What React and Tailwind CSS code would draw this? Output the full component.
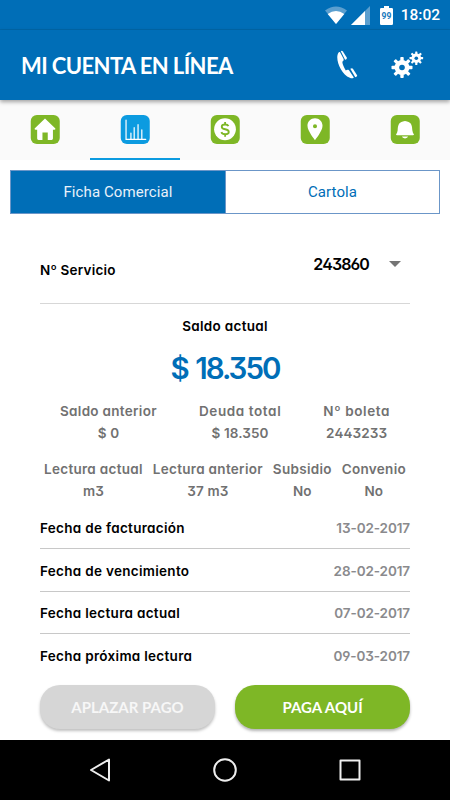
const brand = 'font-[Lato,sans-serif] font-bold';
const body = "font-[Inter,sans-serif] [font-feature-settings:'cv11','ss01']";

function StatusBar() {
  return (
    <div className="relative flex h-[30px] items-center justify-end bg-[#006eb7] pr-[10px] font-[Roboto,sans-serif] text-white shadow-[inset_0_-1px_0_#0066a8]">
      <svg width="22" height="18" viewBox="0 0 22 18" className="mr-[4px]">
        <path d="M0 4.5Q11-3.6 22 4.5L11 18Z" fill="#5b9fcf" />
        <path d="M2.7 8Q11 1.8 19.3 8L11 18Z" fill="#fff" />
      </svg>
      <svg width="19" height="19" viewBox="0 0 19 19" className="mr-[10px]">
        <path d="M0 19L19 0V19Z" fill="#5b9fcf" />
        <path d="M0 19L14 5V19Z" fill="#fff" />
      </svg>
      <svg width="13" height="19" viewBox="0 0 13 19" className="mr-[8px]">
        <path d="M4 0h5v2h2.7Q13 2 13 3.3V17.7Q13 19 11.7 19H1.3Q0 19 0 17.7V3.3Q0 2 1.3 2H4Z" fill="#fff" />
        <text x="6.5" y="12.5" textAnchor="middle" fontSize="8.5" fontWeight="700" fill="#1678bc">99</text>
      </svg>
      <span className="text-[15.5px] leading-[18px] font-medium">18:02</span>
    </div>
  );
}

// toothed wheel drawn around the origin of its group
function Gear({ x, y, scale }) {
  return (
    <g transform={`translate(${x} ${y}) scale(${scale})`}>
      {[0, 45, 90, 135].map((angle) => (
        <rect key={angle} x="-1.7" y="-10.5" width="3.4" height="21" rx="0.8" transform={`rotate(${angle})`} fill="#fff" />
      ))}
      <circle r="7.4" fill="#fff" />
      <circle r="2.8" fill="#006eb7" />
    </g>
  );
}

function Header() {
  return (
    <header className="relative z-10 flex h-[70px] items-center bg-[#006eb7] pl-[21px] shadow-[0_2px_4px_rgba(0,0,0,0.35)]">
      <h1 className={`${brand} w-[315px] pt-px text-[22px] leading-[30px] tracking-[-0.6px] whitespace-nowrap text-white`}>MI CUENTA EN LÍNEA</h1>
      <svg width="22" height="30" viewBox="0 0 22 30" fill="#fff">
        <path d="M2.6 2.6C-1.6 8.2 4.8 23.9 13.8 27.8C15.8 28.7 17.5 28.2 17.8 27.6L13 20.3C11.8 19.5 10.7 20 9.8 20.4C8 17.5 6.6 14.5 6.3 11.7C7.6 11 7.9 10.2 7.5 8.8L4.2 2.5C3.7 1.9 3.1 1.9 2.6 2.6Z" />
        <path d="M4.8 1.2Q5.9 0.4 6.9 1.4L10.9 7.7C11 9 9.9 9.8 9.1 9.7Z" />
        <path d="M14.3 18.8Q16 17.6 16.9 18.7L21.2 25.5Q21.3 26.8 19.3 27.2Z" />
      </svg>
      <svg width="34" height="30" viewBox="0 0 34 30" className="ml-[33px]">
        <Gear x={11} y={17.5} scale={1} />
        <Gear x={25.3} y={8.2} scale={0.65} />
      </svg>
    </header>
  );
}

const tabs = [
  {
    id: 'inicio',
    color: '#7eb726',
    icon: <path d="M14 3.5L24.2 13.2Q24.5 14.5 23 14.5H21.8V23.2Q21.8 24.5 20.5 24.5H16.7V17.3H11.5V24.5H7.6Q6.3 24.5 6.3 23.2V14.5H5Q3.5 14.5 3.8 13.2Z" fill="#fff" />,
  },
  {
    id: 'cuenta',
    color: '#0c9be0',
    icon: (
      <g fill="none" stroke="#fff" strokeWidth="1.2" strokeLinecap="round">
        <path d="M5.2 5V24H24.5" />
        <path d="M10 23.5V17.7M13.2 23.5V12.5M17 23.5V9.5M20.7 23.5V14.5" />
      </g>
    ),
  },
  {
    id: 'pagos',
    color: '#7eb726',
    icon: (
      <>
        <circle cx="14" cy="14" r="10.7" fill="#fff" />
        <path d="M17.4 11Q16.7 9.3 14.1 9.3Q10.8 9.3 10.8 11.5Q10.8 13.4 14.1 14Q17.7 14.6 17.7 16.7Q17.7 18.9 14.3 18.9Q11.2 18.9 10.4 16.8M14.1 6.8V9.3M14.1 18.9V21.4" fill="none" stroke="#7eb726" strokeWidth="1.8" />
      </>
    ),
  },
  {
    id: 'sucursales',
    color: '#7eb726',
    icon: <path fillRule="evenodd" d="M14 3.3C9.8 3.3 6.6 6.5 6.6 10.6C6.6 15.8 14 24.7 14 24.7S21.4 15.8 21.4 10.6C21.4 6.5 18.2 3.3 14 3.3ZM14 9.1A2 2 0 1 1 14 13.1A2 2 0 1 1 14 9.1Z" fill="#fff" />,
  },
  {
    id: 'avisos',
    color: '#7eb726',
    icon: (
      <g fill="#fff">
        <path d="M12 6.5Q14 5.3 16 6.5C20.6 7.2 21 11.4 21.2 15Q21.5 17.5 22.8 19Q22.8 20 21.8 20H6.2Q5.2 20 5.2 19Q6.5 17.5 6.8 15C7 11.4 7.4 7.2 12 6.5Z" />
        <path d="M11 21.2H17Q16.6 23 14 23Q11.4 23 11 21.2Z" />
      </g>
    ),
  },
];

function Tabs() {
  return (
    <nav className="grid h-[60px] grid-cols-5 bg-[#fafafa]">
      {tabs.map((tab) => (
        <button key={tab.id} className={`flex justify-center border-b-[2.5px] pt-[15px] ${tab.id === 'cuenta' ? 'border-[#0c9be0]' : 'border-transparent'}`}>
          <svg width="30" height="29" viewBox="-0.5 0 29 28.5">
            <rect width="28.5" height="28.5" rx="6" fill={tab.color} />
            {tab.icon}
          </svg>
        </button>
      ))}
    </nav>
  );
}

function Stat({ label, value }) {
  return (
    <div className="flex flex-col items-center whitespace-nowrap">
      <span>{label}</span>
      <span className="tracking-[0.1px]">{value}</span>
    </div>
  );
}

const fechas = [
  { label: 'Fecha de facturación', value: '13-02-2017' },
  { label: 'Fecha de vencimiento', value: '28-02-2017' },
  { label: 'Fecha lectura actual', value: '07-02-2017' },
  { label: 'Fecha próxima lectura', value: '09-03-2017' },
];

export default function App() {
  return (
    <div className="flex h-[800px] w-[450px] flex-col overflow-hidden bg-white">
      <StatusBar />
      <Header />
      <Tabs />

      <div className="mx-[10px] mt-[10px] grid h-[44px] shrink-0 grid-cols-2 border border-[#6b96c8] font-[Roboto,sans-serif] text-[15px] tracking-[0.1px]">
        <button className="bg-[#006eb7] text-[#e8f1fa]">Ficha Comercial</button>
        <button className="border-l border-[#6b96c8] text-[#006eb7]">Cartola</button>
      </div>

      <main className={`${body} flex flex-1 flex-col px-[40px] text-[13.5px] leading-[22px] font-semibold tracking-[0.3px] text-black`}>
        <div className="flex h-[90px] shrink-0 justify-between border-b border-[#d7d7d7]">
          <span className="pt-[45px] tracking-[0.2px]">Nº Servicio</span>
          <div className="flex items-center self-start pt-[39px] pr-[9px]">
            <span className="text-[16px] tracking-[-0.9px]">243860</span>
            <svg width="12" height="6" viewBox="0 0 12 6" className="ml-[20px]">
              <path d="M0 0H12L6 6Z" fill="#757575" />
            </svg>
          </div>
        </div>

        <div className="pt-[11px] text-center">Saldo actual</div>
        <div className="mt-[13px] text-center text-[29.5px] leading-[36px] tracking-[-2px] [word-spacing:2px] text-[#006eb7]">$ 18.350</div>

        <div className="mt-[14px] flex justify-between px-[20px] text-[#717171]">
          <Stat label="Saldo anterior" value="$ 0" />
          <div className="tracking-[0.6px]">
            <Stat label="Deuda total" value="$ 18.350" />
          </div>
          <div className="tracking-[0.6px]">
            <Stat label="Nº boleta" value="2443233" />
          </div>
        </div>
        <div className="mt-[14px] flex justify-between px-[4px] text-[#717171]">
          <Stat label="Lectura actual" value="m3" />
          <Stat label="Lectura anterior" value="37 m3" />
          <Stat label="Subsidio" value="No" />
          <Stat label="Convenio" value="No" />
        </div>

        <div className="mt-[4.5px] divide-y divide-[#c8c8c8]">
          {fechas.map((fecha) => (
            <div key={fecha.label} className="flex h-[42.5px] items-center justify-between pt-[2px]">
              <span>{fecha.label}</span>
              <span className="tracking-[-0.1px] text-[#8a8a8d]">{fecha.value}</span>
            </div>
          ))}
        </div>

        <div className={`${brand} mt-[8.5px] grid grid-cols-2 gap-[20px] text-[15px] tracking-normal text-white`}>
          <button className="h-[44px] rounded-[20px] bg-[#d6d6d6] text-[#f7f7f7] shadow-[0_2px_3px_rgba(0,0,0,0.25)]">APLAZAR PAGO</button>
          <button className="h-[44px] rounded-[20px] bg-[#7eb726] shadow-[0_2px_3px_rgba(0,0,0,0.3)]">PAGA AQUÍ</button>
        </div>
      </main>

      <div className="flex h-[60px] shrink-0 items-center justify-between bg-black px-[89px]">
        <svg width="22" height="24" viewBox="0 0 22 24" fill="none" stroke="#eee" strokeWidth="2" strokeLinejoin="round">
          <path d="M20 1.5V22.5L2 12Z" />
        </svg>
        <svg width="24" height="24" viewBox="0 0 24 24" fill="none" stroke="#eee" strokeWidth="2">
          <circle cx="12" cy="12" r="10.8" />
        </svg>
        <svg width="22" height="22" viewBox="0 0 22 22" fill="none" stroke="#eee" strokeWidth="2" strokeLinejoin="round">
          <path d="M1.5 1.5H20.5V20.5H1.5Z" />
        </svg>
      </div>
    </div>
  );
}
